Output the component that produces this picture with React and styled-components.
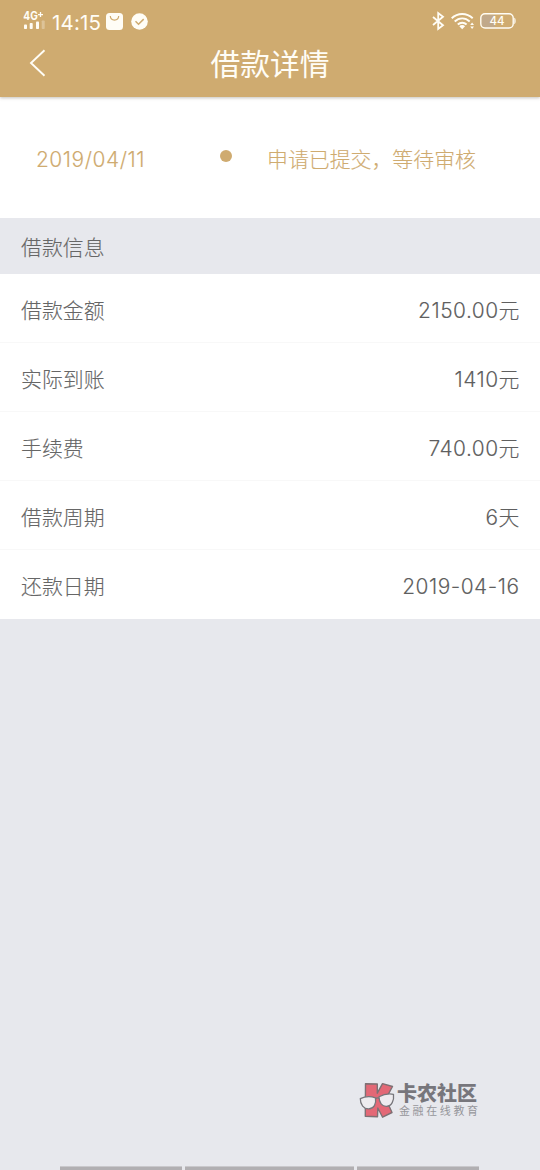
import styled, { createGlobalStyle } from "styled-components";

const GlobalStyle = createGlobalStyle`
  * {
    box-sizing: border-box;
  }

  body {
    margin: 0;
    background: #e7e8ed;
    font-family: Inter, "Noto Sans CJK SC", sans-serif;
    font-weight: 300;
  }
`

const Page = styled.div`
  position: relative;
  display: flex;
  flex-direction: column;
  width: 540px;
  height: 1170px;
  overflow: hidden;
  background: #e7e8ed;
`

const Header = styled.header`
  position: relative;
  z-index: 1;
  flex: none;
  height: 97px;
  background: #cfab70;
  color: #fffdf6;
  box-shadow: 0 1px 3px rgba(90, 80, 60, 0.35);
`

const StatusBar = styled.div`
  display: flex;
  justify-content: space-between;
  height: 40px;
  padding: 0 23px;
`

const StatusGroup = styled.div`
  display: flex;
  align-items: center;
  height: 42px;
`

const Clock = styled.span`
  width: 51px;
  margin: 2px 3px 0 7px;
  font-size: 20.5px;
  font-weight: 400;
  letter-spacing: 0.2px;
  white-space: nowrap;
`

const StatusIcon = styled.svg`
  flex: none;
  margin-left: ${(props) => props.$gap || 0}px;
  overflow: visible;
`

const TitleBar = styled.div`
  display: grid;
  grid-template-columns: 75px 1fr 75px;
  align-items: center;
  height: 48px;
`

const BackButton = styled.button`
  display: flex;
  margin-bottom: 3px;
  padding: 0 0 0 29px;
  border: 0;
  background: none;
  color: inherit;
`

const Title = styled.h1`
  margin: 0;
  font-size: 29.8px;
  font-weight: 400;
  line-height: 48px;
  text-align: center;
`

const Progress = styled.section`
  display: flex;
  flex: none;
  align-items: center;
  height: 121px;
  padding: 4px 36px 0;
  background: #fff;
  color: #cfab70;
  font-size: 20.9px;
  line-height: 30px;
  -webkit-text-stroke: 0.12px;
`

const ProgressDate = styled.div`
  width: 184px;
  letter-spacing: 0.55px;
`

const Dot = styled.div`
  width: 12px;
  height: 12px;
  margin: -7px 35px 0 0;
  border-radius: 50%;
  background: #cfab70;
`

const ProgressText = styled.div`
  white-space: nowrap;
`

const SectionTitle = styled.h2`
  flex: none;
  height: 56px;
  margin: 0;
  padding: 0 21px;
  color: #666;
  font-size: 20.9px;
  font-weight: 300;
  line-height: 59px;
  -webkit-text-stroke: 0.12px;
`

const List = styled.div`
  background: #fff;
`

const Row = styled.div`
  display: flex;
  align-items: center;
  justify-content: space-between;
  height: 69px;
  padding: 6px 20.5px 0 21px;
  border-bottom: 1px solid #f8f8f8;
  color: #666;
  font-size: 20.9px;
  line-height: 30px;
  -webkit-text-stroke: 0.12px;

  &:last-child {
    border-bottom-color: #fff;
  }
`

const Label = styled.span``

const Value = styled.span`
  color: #5f5f5f;
`

const Amount = styled.span`
  letter-spacing: 0.5px;
`

const Watermark = styled.div`
  position: absolute;
  left: 359px;
  top: 1081px;
  display: flex;
  gap: 2px;
`

const WatermarkText = styled.div`
  display: flex;
  flex-direction: column;
  padding-top: 2px;
  white-space: nowrap;
`

const Brand = styled.div`
  color: #77767c;
  font-size: 20px;
  font-weight: 900;
  line-height: 23px;
`

const Slogan = styled.div`
  padding-left: 2px;
  color: #96969b;
  font-size: 11px;
  font-weight: 400;
  letter-spacing: 2.6px;
  line-height: 11px;
`

const NavHints = styled.div`
  display: flex;
  gap: 3px;
  margin-top: auto;
  padding-left: 60px;
`

const NavHint = styled.div`
  width: ${(props) => props.$width}px;
  height: 4px;
  border-top: 1px solid #c9c8cc;
  background: #b1afb2;
`

const rows = [
  { label: "借款金额", value: "2150.00", unit: "元" },
  { label: "实际到账", value: "1410", unit: "元" },
  { label: "手续费", value: "740.00", unit: "元" },
  { label: "借款周期", value: "6", unit: "天" },
  { label: "还款日期", value: "2019-04-16" },
]

const SignalIcon = () => (
  <StatusIcon width="22" height="20" viewBox="0 0 22 20" fill="currentColor">
    <text x="0.3" y="9.3" fontSize="11.5" fontWeight="700" textLength="14.5" lengthAdjust="spacingAndGlyphs">4G</text>
    <path d="M15 3.6h5M17.5 1.1v5" stroke="currentColor" strokeWidth="1.3" />
    <rect x="1" y="13.5" width="3" height="4.5" rx="0.8" />
    <rect x="6.7" y="12" width="3" height="6" rx="0.8" />
    <rect x="13" y="10.5" width="3" height="7.5" rx="0.8" />
    <rect x="18.7" y="9.5" width="3" height="8.5" rx="0.8" opacity="0.3" />
  </StatusIcon>
)

const BagIcon = () => (
  <StatusIcon width="17" height="17" viewBox="0 0 17 17">
    <rect width="17" height="17" rx="3.5" fill="currentColor" />
    <path d="M4.3 3c.3 5.4 8.1 5.4 8.4 0" fill="none" stroke="#cfab70" strokeWidth="1.2" />
  </StatusIcon>
)

const CheckIcon = () => (
  <StatusIcon $gap={8} width="17" height="17" viewBox="0 0 17 17">
    <circle cx="8.5" cy="8.5" r="8.3" fill="currentColor" />
    <path d="M4.5 8.3l3 3 5.2-5.2" fill="none" stroke="#cfab70" strokeWidth="1.5" />
  </StatusIcon>
)

const BluetoothIcon = () => (
  <StatusIcon width="12" height="18" viewBox="0 0 12 18" fill="none" stroke="currentColor" strokeWidth="1.8">
    <path d="M1 5l10 8.2L6.2 17V1L11 4.8 1 13" />
  </StatusIcon>
)

const WifiIcon = () => (
  <StatusIcon $gap={7} width="24" height="18" viewBox="0 0 24 18" fill="none" stroke="currentColor" strokeWidth="1.9">
    <path d="M0.7 6.2c6-5.7 15-5.7 21 0M3.7 9.5c4.3-4.2 10.7-4.2 15 0M6.8 12.5c2.5-2.4 6.3-2.4 8.8 0" />
    <path d="M8.3 14.2c1.6-1.6 4.2-1.6 5.8 0L11.2 17.3z" fill="currentColor" stroke="none" />
    <path d="M19.2 13l1.9-2.4 1.9 2.4zM19.2 14.5l1.9 2.4 1.9-2.4z" fill="currentColor" stroke="none" />
  </StatusIcon>
)

const BatteryIcon = () => (
  <StatusIcon $gap={5} width="37" height="16" viewBox="0 0 37 16">
    <path d="M5 2h10v12H5a3.5 3.5 0 0 1-3.5-3.5v-5A3.5 3.5 0 0 1 5 2z" fill="#c1a98a" />
    <rect x="0.8" y="0.8" width="32.4" height="14.2" rx="4.2" fill="none" stroke="currentColor" strokeWidth="1.4" />
    <path d="M34.3 4.8c1.8.4 1.8 6 0 6.4z" fill="currentColor" />
    <text x="17" y="12.2" textAnchor="middle" fill="currentColor" fontSize="11.5" fontWeight="500">44</text>
  </StatusIcon>
)

const BrandLogo = () => (
  <svg width="36" height="38" viewBox="0 0 36 38" strokeLinejoin="round">
    <path
      d="M6.5 2.8L18.3 3v9.2l5.2-9.6 10 2.9-6.7 12.3 6.2 13.7-9.4 4.7L18.8 27l-.3 8.8-12.2-.6z"
      fill="#e36876"
      stroke="#7e7074"
      strokeWidth="1.4"
    />
    <path
      d="M1.3 17.6c4.2-2 10.6-2.4 15.2-.8 1 6.4-1.6 10.9-6.7 11.1-5 .2-8.6-4.2-8.5-10.3zM20 15.8c4.5-2.5 9.5-3.4 14.5-2.5.8 6.4-1.9 11.7-6.9 12-4.5.3-7.6-3.7-7.6-9.5z"
      fill="#eeecef"
      stroke="#77767b"
      strokeWidth="1.3"
    />
    <path d="M16.4 17.8c1.2-1 2.4-1.2 3.6-.4" fill="none" stroke="#77767b" strokeWidth="1.3" />
  </svg>
)

const App = () => {
  return (<>
    <GlobalStyle />
    <Page>
      <Header>
        <StatusBar>
          <StatusGroup>
            <SignalIcon />
            <Clock>14:15</Clock>
            <BagIcon />
            <CheckIcon />
          </StatusGroup>
          <StatusGroup>
            <BluetoothIcon />
            <WifiIcon />
            <BatteryIcon />
          </StatusGroup>
        </StatusBar>
        <TitleBar>
          <BackButton aria-label="返回">
            <svg width="17" height="28" viewBox="0 0 17 28" fill="none" stroke="currentColor" strokeWidth="1.9">
              <path d="M15.5 1.2L2 14l13.5 12.8" />
            </svg>
          </BackButton>
          <Title>借款详情</Title>
        </TitleBar>
      </Header>
      <Progress>
        <ProgressDate>2019/04/11</ProgressDate>
        <Dot />
        <ProgressText>申请已提交，等待审核</ProgressText>
      </Progress>
      <SectionTitle>借款信息</SectionTitle>
      <List>
        {rows.map((row) => (
          <Row key={row.label}>
            <Label>{row.label}</Label>
            <Value><Amount>{row.value}</Amount>{row.unit}</Value>
          </Row>
        ))}
      </List>
      <NavHints>
        <NavHint $width={122} />
        <NavHint $width={169} />
        <NavHint $width={122} />
      </NavHints>
      <Watermark>
        <BrandLogo />
        <WatermarkText>
          <Brand>卡农社区</Brand>
          <Slogan>金融在线教育</Slogan>
        </WatermarkText>
      </Watermark>
    </Page>
  </>);
}

export default App;
